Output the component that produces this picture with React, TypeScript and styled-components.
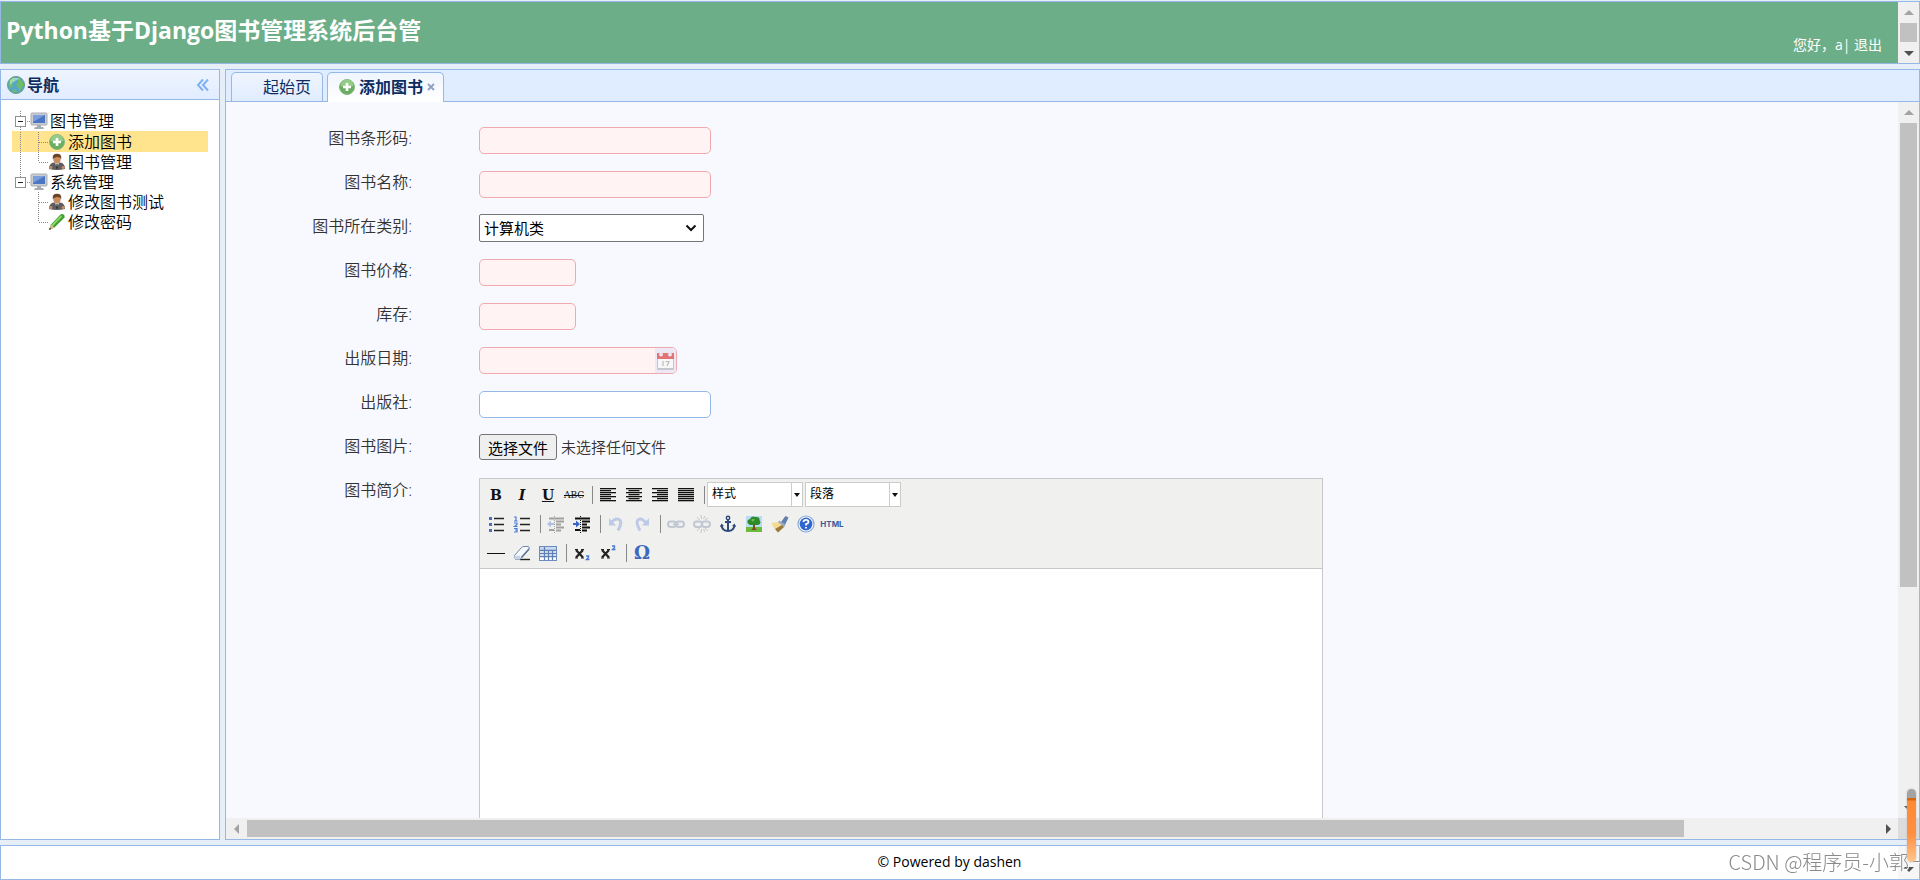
import React, { useRef } from 'react';
import styled, { createGlobalStyle, css } from 'styled-components';

const line = '#95b8e7';
const fontStack = '"Open Sans", "Noto Sans CJK SC", sans-serif';

const GlobalStyle = createGlobalStyle`
  *, *::before, *::after { box-sizing: border-box; }
  body { margin: 0; overflow: hidden; background: #e6eff8; color: #000; font: 16px/20px ${fontStack}; }
  button, input, select, textarea { font-family: inherit; margin: 0; }
`;

/* ---------- page frame ---------- */

const Page = styled.div`
  display: flex;
  flex-direction: column;
  gap: 5px;
  height: 100vh;
  padding-top: 1px;
`;

const Header = styled.header`
  display: flex;
  flex: 0 0 63px;
  border: 1px solid ${line};
  background: #6cae87;
  color: #fff;
`;

const HeaderBody = styled.div`
  display: flex;
  flex: 1;
  align-items: center;
  justify-content: space-between;
  padding: 0 16px 0 5px;
`;

const Title = styled.h1`
  margin: 0 0 6px;
  font-size: 23px;
  line-height: 30px;
  font-weight: 700;
`;

const UserLine = styled.div`
  align-self: flex-end;
  padding-bottom: 8px;
  font-size: 14px;
  a { color: inherit; text-decoration: none; }
`;

const Middle = styled.div`
  display: flex;
  flex: 1;
  gap: 5px;
  min-height: 0;
`;

const Footer = styled.footer`
  display: flex;
  flex: 0 0 35px;
  border: 1px solid ${line};
  background: #fff;
  font-size: 14px;
`;

const FooterText = styled.div`
  flex: 1;
  text-align: center;
  line-height: 32px;
`;

/* ---------- scrollbars ---------- */

const Track = styled.div<{ $row?: boolean; $bg?: string }>`
  display: flex;
  flex-direction: ${p => (p.$row ? 'row' : 'column')};
  flex-shrink: 0;
  ${p => (p.$row ? 'height: 21px;' : 'width: 21px;')}
  background: ${p => p.$bg || '#f0f0f0'};
`;

const ArrowBox = styled.div`
  display: flex;
  flex: 0 0 21px;
  align-items: center;
  justify-content: center;
`;

const Thumb = styled.div<{ $size: number; $row?: boolean }>`
  flex: ${p => p.$size} 0 0;
  margin: ${p => (p.$row ? '2px 0' : '0 2px')};
  background: #c1c1c1;
`;

const Rest = styled.div<{ $size: number }>`
  flex: ${p => p.$size} 0 0;
`;

const arrows = {
  up: 'M0 7 5 2 10 7Z',
  down: 'M0 3 5 8 10 3Z',
  left: 'M7 0 2 5 7 10Z',
  right: 'M3 0 8 5 3 10Z',
};

const Arrow = ({ dir, dim }: { dir: keyof typeof arrows; dim?: boolean }) => (
  <ArrowBox>
    <svg width="10" height="10" aria-hidden="true">
      <path d={arrows[dir]} fill={dim ? '#a3a3a3' : '#505050'} />
    </svg>
  </ArrowBox>
);

/* ---------- navigation ---------- */

const Side = styled.aside`
  flex: 0 0 220px;
  border: 1px solid ${line};
  background: #fff;
`;

const SideHead = styled.div`
  display: flex;
  align-items: center;
  height: 30px;
  padding: 0 9px 0 5px;
  border-bottom: 1px solid ${line};
  background: linear-gradient(#eff5ff, #e0ecff);
`;

const SideTitle = styled.h2`
  flex: 1;
  margin: 0 0 0 1px;
  font-size: 16px;
  line-height: 20px;
  color: #0e2d5f;
`;

const IconButton = styled.button`
  display: flex;
  padding: 0;
  border: 0;
  background: none;
  cursor: pointer;
`;

const Tree = styled.ul`
  margin: 0;
  padding: 11px 11px 0;
  list-style: none;
  font-weight: 350;
  ul { margin: 0; padding: 0; list-style: none; }
`;

const Node = styled.a<{ $selected?: boolean }>`
  display: flex;
  align-items: center;
  height: ${p => (p.$selected ? '21px' : '20px')};
  background: ${p => (p.$selected ? '#ffe48d' : 'none')};
  color: #000;
  text-decoration: none;
  svg { flex: none; }
`;

const NodeText = styled.span`
  padding-left: 2px;
`;

const Dots = ({ d }: { d: string }) => (
  <path d={d} stroke="#888" strokeDasharray="1 1" fill="none" />
);

const Toggle = ({ last }: { last?: boolean }) => (
  <svg width="18" height="20" aria-hidden="true">
    <Dots d={last ? 'M8.5 0V10' : 'M8.5 0V20'} />
    <Dots d="M13 10.5H18" />
    <rect x="3.5" y="5.5" width="10" height="10" fill="#fff" stroke="#919191" />
    <path d="M6 10.5H11" stroke="#222" />
  </svg>
);

const Indent = ({ through }: { through?: boolean }) => (
  <svg width="18" height="20" aria-hidden="true">{through && <Dots d="M8.5 0V20" />}</svg>
);

const Join = ({ last }: { last?: boolean }) => (
  <svg width="18" height="20" aria-hidden="true">
    <Dots d={last ? 'M8.5 0V10' : 'M8.5 0V20'} />
    <Dots d="M9 10.5H18" />
  </svg>
);

const Monitor = () => (
  <svg width="18" height="18" viewBox="0 0 18 18" aria-hidden="true">
    <rect x="1" y="1" width="16" height="12" rx="1" fill="#c9cdd3" stroke="#a9adb4" />
    <rect x="3" y="3" width="12" height="8" fill="#4a76c4" />
    <path d="M3 3H15L3 10Z" fill="#7c9fdb" />
    <path d="M7 13H11V15H13L14 17H4L5 15H7Z" fill="#a7abb2" />
  </svg>
);

const AddIcon = () => (
  <svg width="18" height="18" viewBox="0 0 18 18" aria-hidden="true">
    <circle cx="9" cy="9" r="7.5" fill="#69ad5f" stroke="#86b880" />
    <path d="M2.500 8A6.500 6.500 0 0 1 15.500 8Q9 10 2.500 8Z" fill="#95cb88" />
    <path d="M9 5V13M5 9H13" stroke="#fff" strokeWidth="2.600" />
  </svg>
);

const UserIcon = () => (
  <svg width="18" height="18" viewBox="0 0 18 18" aria-hidden="true">
    <path d="M1 16Q1 10 6 9.500H12Q17 10 17 16Q9 18 1 16Z" fill="#5e5e62" />
    <path d="M7 10 9 15 11 10Z" fill="#ddd" />
    <path d="M8.500 11H9.500L10 15 9 16 8 15Z" fill="#333" />
    <circle cx="2.800" cy="14.500" r="1.600" fill="#c78e63" />
    <circle cx="15.200" cy="14.500" r="1.600" fill="#c78e63" />
    <ellipse cx="9" cy="6" rx="3.800" ry="4.600" fill="#c78e63" />
    <path d="M4.800 6Q4 .800 9 .800T13.200 6Q12 3.600 9 4T4.800 6Z" fill="#6b4426" />
  </svg>
);

const Pencil = () => (
  <svg width="18" height="18" viewBox="0 0 18 18" aria-hidden="true">
    <path d="M1 17 3 11.500 12.500 1.500Q15 0 16.500 2.500L16.500 4.500 6.500 14.500Z" fill="#3f9f2f" />
    <path d="M3.500 12 13 2.200 14.200 3.400 4.700 13.200Z" fill="#8fdc6f" />
    <path d="M1 17 3 11.500 6.500 14.500Z" fill="#d9b98a" />
    <path d="M1 17 1.900 14.500 3.400 16Z" fill="#333" />
  </svg>
);

const Globe = () => (
  <svg width="20" height="20" viewBox="0 0 20 20" aria-hidden="true">
    <circle cx="10" cy="10" r="8.500" fill="#56a5cf" stroke="#6b9c74" />
    <path d="M3 6Q6 1.500 10 3L9 6 6 8 7 11 4 13Q1.500 10 3 6ZM12 3Q17 5 17.500 10L14 16 12 12 10 10 12 7ZM6 15 10 14 11 17.500Q8 18 6 15Z" fill="#6dbd68" />
    <path d="M4 5Q9 1 14 4Q9 5 4 10Z" fill="#c5ecd9" opacity=".6" />
  </svg>
);

/* ---------- tabs ---------- */

const Main = styled.main`
  display: flex;
  flex: 1;
  flex-direction: column;
  min-width: 0;
  border: 1px solid ${line};
  background: #f8f9ff;
`;

const TabBar = styled.div`
  display: flex;
  flex: 0 0 32px;
  gap: 4px;
  padding: 2px 0 0 5px;
  border-bottom: 1px solid ${line};
  background: #e0ecff;
`;

const Tab = styled.div<{ $active?: boolean }>`
  display: flex;
  align-items: center;
  border: 1px solid ${line};
  border-bottom: 0;
  border-radius: 5px 5px 0 0;
  ${p =>
    p.$active
      ? css`margin-bottom: -1px; padding: 0 8px 1px 10px; background: linear-gradient(#eff5ff, #fff);`
      : css`padding: 0 11px 0 31px; background: linear-gradient(#eff5ff, #e0ecff);`}
`;

const TabButton = styled.button<{ $active?: boolean }>`
  display: flex;
  align-items: center;
  gap: 3px;
  padding: 0;
  border: 0;
  background: none;
  color: #0e2d5f;
  font-size: 16px;
  line-height: 20px;
  font-weight: ${p => (p.$active ? 700 : 400)};
`;

const CloseTab = styled(IconButton)`
  margin-left: 4px;
`;

const Content = styled.div`
  display: grid;
  flex: 1;
  grid-template-columns: minmax(0, 1fr) 21px;
  grid-template-rows: minmax(0, 1fr) 21px;
  min-height: 0;
`;

const Corner = styled.div`
  background: #dcdcdc;
`;

/* ---------- form ---------- */

const Form = styled.form`
  display: flex;
  flex-direction: column;
  gap: 16px;
  overflow: auto;
  scrollbar-width: none;
  padding-top: 24px;
  color: #333;
`;

const Row = styled.div`
  display: grid;
  flex: none;
  grid-template-columns: 186px minmax(0, 1fr);
  column-gap: 67px;
  align-items: start;
  min-height: 28px;
`;

const Label = styled.label`
  text-align: right;
  line-height: 24px;
  font-weight: 350;
`;

const TextField = styled.input<{ $width: number; $plain?: boolean }>`
  width: ${p => p.$width}px;
  height: 27px;
  margin-top: 1px;
  padding: 0 6px;
  border: 1px solid ${p => (p.$plain ? line : '#f0a9ae')};
  border-radius: 5px;
  background: ${p => (p.$plain ? '#fff' : '#fff3f3')};
  font-size: 15px;
`;

const DateBox = styled.div`
  display: flex;
  width: 198px;
  height: 27px;
  margin-top: 1px;
  border: 1px solid #f0a9ae;
  border-radius: 5px;
  background: #fff3f3;
  overflow: hidden;
`;

const DateInput = styled.input`
  flex: 1;
  min-width: 0;
  padding: 0 6px;
  border: 0;
  background: none;
  font-size: 15px;
`;

const DateButton = styled(IconButton)`
  align-items: center;
  padding: 0 2px;
  background: #ece9f5;
`;

const SelectBox = styled.div<{ $small?: boolean }>`
  display: inline-grid;
  grid-template-columns: minmax(0, 1fr) ${p => (p.$small ? 12 : 19)}px;
  align-items: center;
  width: ${p => (p.$small ? 96 : 225)}px;
  svg { grid-area: 1 / 2; pointer-events: none; }
`;

const Select = styled.select<{ $small?: boolean }>`
  grid-area: 1 / 1 / 2 / 3;
  appearance: none;
  width: 100%;
  height: ${p => (p.$small ? 25 : 28)}px;
  padding: 0 ${p => (p.$small ? '12px 2px 4px' : '20px 0 4px')};
  border: 1px solid ${p => (p.$small ? '#ccc' : '#767676')};
  border-radius: ${p => (p.$small ? 0 : 2)}px;
  background: #fff;
  color: #000;
  font-size: ${p => (p.$small ? 12 : 15)}px;
`;

const FileRow = styled.div`
  display: flex;
  align-items: center;
  gap: 4px;
  font-size: 15px;
  font-weight: 350;
`;

const FileInput = styled.input`
  display: none;
`;

const FileButton = styled.button`
  height: 26px;
  padding: 0 8px;
  border: 1px solid #767676;
  border-radius: 3px;
  background: #efefef;
  color: #000;
  font-size: 15px;
`;

/* ---------- rich text editor ---------- */

const Editor = styled.div`
  display: flex;
  flex-direction: column;
  width: 844px;
  max-width: 100%;
  border: 1px solid #c8c8cc;
  background: #fff;
`;

const Toolbars = styled.div`
  padding: 1px 2px 1px 3px;
  border-bottom: 1px solid #c8c8cc;
  background: #f0f0ee;
`;

const ToolRow = styled.div`
  display: flex;
  align-items: center;
  height: 29px;
`;

const Tool = styled.button`
  display: flex;
  align-items: center;
  justify-content: center;
  width: 26px;
  height: 25px;
  padding: 0;
  border: 0;
  background: none;
  color: #111;
  &:disabled { opacity: .35; }
`;

const GlyphTool = styled(Tool)<{ $size?: number; $tone?: string }>`
  font: 700 ${p => p.$size || 14}px/20px "DejaVu Serif", serif;
  color: ${p => p.$tone || '#111'};
`;

const StrikeTool = styled(Tool)`
  font: 400 9px/20px "DejaVu Serif", serif;
`;

const HtmlTool = styled(Tool)`
  font: 700 8px/20px Inter, sans-serif;
  color: #3a5c9c;
`;

const Divider = styled.span`
  width: 1px;
  height: 18px;
  margin: 0 2px 0 5px;
  background: #888;
`;

const SelectGroup = styled.div`
  display: flex;
  gap: 2px;
`;

const EditArea = styled.textarea`
  height: 375px;
  border: 0;
  outline: 0;
  resize: none;
  padding: 8px;
`;

const Svg = ({ children }: { children: React.ReactNode }) => (
  <svg width="20" height="20" viewBox="0 0 20 20" fill="none" aria-hidden="true">{children}</svg>
);

const Align = ({ kind }: { kind: 'left' | 'center' | 'right' | 'full' }) => (
  <Svg>
    {[4, 6, 8, 10, 12, 14, 16].map((y, i) => {
      const w = kind === 'full' || i % 2 === 0 ? 16 : 11;
      const x = kind === 'center' ? 10 - w / 2 : kind === 'right' ? 18 - w : 2;
      return <rect key={y} x={x} y={y - 1} width={w} height="1.300" fill="#111" />;
    })}
  </Svg>
);

const BulletIcon = () => (
  <Svg>
    <path d="M8 4.500H18M8 10.500H18M8 16.500H18" stroke="#222" strokeWidth="1.300" />
    <path d="M3 3H6V6H3ZM3 9H6V12H3ZM3 15H6V18H3Z" fill="#4a6fb5" />
  </Svg>
);

const NumberIcon = () => (
  <Svg>
    <path d="M8 4.500H18M8 10.500H18M8 16.500H18" stroke="#222" strokeWidth="1.300" />
    <path d="M2 3H4V7M2 7H5.500M2 9H5V10.500L2.500 12.500H5.500M2 14.500H5V18H2M3 16H5" stroke="#4a7bd5" strokeWidth="1.200" />
  </Svg>
);

const IndentIcon = ({ out }: { out?: boolean }) => (
  <Svg>
    <path d="M3 4.500H18M10 7.500H18M10 10.500H15M3 16H8M10 13.500H18M10 16.500H15" stroke="#111" strokeWidth="2" />
    <path d="M8.500 2V19" stroke="#111" strokeDasharray="1 1" />
    <path d={out ? 'M1 10 5 6.500V9H8V11H5V13.500Z' : 'M8 10 4 6.500V9H1V11H4V13.500Z'} fill="#3565c8" />
  </Svg>
);

const UndoIcon = () => (
  <Svg>
    <path d="M5 9Q9 3.500 13 5.500T12 16.500" stroke="#5f86d8" strokeWidth="3" />
    <path d="M3 4V11.500H10Z" fill="#5f86d8" />
  </Svg>
);

const RedoIcon = () => (
  <Svg>
    <path d="M14 9Q10 3.500 6.500 5.500T8 16.500" stroke="#5f86d8" strokeWidth="3" />
    <path d="M17 4V11.500H10Z" fill="#5f86d8" />
  </Svg>
);

const LinkIcon = ({ broken }: { broken?: boolean }) => (
  <Svg>
    <rect x="2" y="7.500" width="8" height="5.500" rx="2.700" stroke="#6c7ea3" strokeWidth="2" />
    <rect x="10" y="7.500" width="8" height="5.500" rx="2.700" stroke="#6c7ea3" strokeWidth="2" />
    {broken ? (
      <path d="M9 1 9.500 5M13 2 11.500 5M5 3 7.500 6M16 4 13 6M9 19 9.500 15M13 18 11.500 15M5 17 7.500 14M16 17 13 14" stroke="#777" />
    ) : (
      <path d="M7 10.300H13" stroke="#6c7ea3" strokeWidth="1.600" />
    )}
  </Svg>
);

const AnchorIcon = () => (
  <Svg>
    <circle cx="10" cy="4" r="1.700" stroke="#2e4a78" strokeWidth="1.400" />
    <path d="M10 6V17M7 8H13M3.500 11Q4 17 10 17T16.500 11" stroke="#2e4a78" strokeWidth="2" />
    <path d="M2 13 3.500 9.500 6 12ZM18 13 16.500 9.500 14 12Z" fill="#2e4a78" />
  </Svg>
);

const ImageIcon = () => (
  <Svg>
    <rect x="2" y="2" width="16" height="16" fill="#b9dcf5" />
    <rect x="2" y="13" width="16" height="5" fill="#6dbb3c" />
    <path d="M9 9H11V14L13 16H7L9 14Z" fill="#7a4d20" />
    <path d="M4 9.500Q2 6 6 5Q8 1.500 11 3Q16 2.500 15.500 6Q18 9.500 14 11H6Z" fill="#2f8a2a" />
    <path d="M7 6Q9 4 11 5.500L9 8Z" fill="#65bd4d" />
  </Svg>
);

const BrushIcon = () => (
  <Svg>
    <path d="M11 8 15.500 2 18.500 3.500 15 11Z" fill="#5f7fae" />
    <path d="M9 6.500 15.500 10.500 14 13.500 7.500 9Z" fill="#99a9c4" />
    <path d="M1.500 9 8 8 14 13 8 18.500Q7 16 5 15T1.500 9Z" fill="#f3dc92" />
    <path d="M5 15 12 11 14 13 8 18.500Z" fill="#9a7a3d" />
  </Svg>
);

const HelpIcon = () => (
  <Svg>
    <circle cx="10" cy="10" r="8" fill="#fff" stroke="#8aa6d8" strokeWidth="1.200" />
    <circle cx="10" cy="10" r="6.400" fill="#2f66cf" />
    <path d="M7.500 8Q7.500 5.800 10 5.800T12.500 8Q12.500 9.200 10 10.200V11.500M10 13V14.500" stroke="#fff" strokeWidth="1.800" />
  </Svg>
);

const EraserIcon = () => (
  <Svg>
    <path d="M8 16.500H18" stroke="#222" strokeWidth="1.400" />
    <path d="M2.500 12.500 9.500 4.500Q10.500 3.500 12 3.500H16Q18 4 17 6L9.500 14.500 8 16.500H4Q1.500 15.500 2.500 12.500Z" fill="#f5f8fc" stroke="#6f86a8" />
    <path d="M2.500 12.800H8.500L8 16.500H4Q1.500 15.500 2.500 12.800Z" fill="#c9d4e6" />
    <path d="M9.500 14.500 17 6" stroke="#5c7397" strokeWidth="1.600" />
  </Svg>
);

const TableIcon = () => (
  <Svg>
    <rect x="1.500" y="3.500" width="17" height="14" fill="#fff" stroke="#6e8cbf" />
    <path d="M2 4H18V7H2Z" fill="#c7d8f0" />
    <path d="M2 7.500H18M2 10.500H18M2 13.500H18M6.500 4V17M10.500 7V17M14.500 7V17" stroke="#5f7fb5" strokeWidth="1.300" />
  </Svg>
);

const ScriptIcon = ({ sup }: { sup?: boolean }) => (
  <Svg>
    <path d="M4 7 11 14.500M11 7 4 14.500" stroke="#222" strokeWidth="2.200" />
    <path d="M3 6.500H6M9 6.500H12M3 15H6M9 15H12" stroke="#222" />
    <path d={sup ? 'M14 3H16.500V4.500L14.500 6.500H17.500' : 'M14 13H16.500V14.500L14.500 16.500H17.500'} stroke="#4a78cf" strokeWidth="1.300" />
  </Svg>
);

const CalendarIcon = () => (
  <svg width="17" height="20" viewBox="0 0 17 20" aria-hidden="true">
    <rect x="0" y="2" width="17" height="17" rx="1" fill="#c6c6ce" />
    <rect x="1" y="7" width="15" height="10" fill="#f7f7f7" />
    <rect x="0" y="2" width="17" height="6" fill="#e27476" />
    <circle cx="4" cy="3.500" r="2" fill="#ece4ea" />
    <circle cx="13" cy="3.500" r="2" fill="#ece4ea" />
    <path d="M6 10V15M8.500 10.500H12L10 15" stroke="#bcbcbc" fill="none" strokeWidth="1.200" />
  </svg>
);

const SmallSelect = ({ text }: { text: string }) => (
  <SelectBox $small>
    <Select $small aria-label={text}>
      <option>{text}</option>
    </Select>
    <svg width="11" height="23" aria-hidden="true">
      <path d="M0.500 0V23" stroke="#ccc" />
      <path d="M3 10H9L6 14Z" fill="#111" />
    </svg>
  </SelectBox>
);

const RichEditor = () => (
  <Editor>
    <Toolbars>
      <ToolRow>
        <GlyphTool type="button" aria-label="粗体">B</GlyphTool>
        <GlyphTool type="button" aria-label="斜体"><em>I</em></GlyphTool>
        <GlyphTool type="button" aria-label="下划线"><u>U</u></GlyphTool>
        <StrikeTool type="button" aria-label="删除线"><s>ABC</s></StrikeTool>
        <Divider />
        <Tool type="button" aria-label="左对齐"><Align kind="left" /></Tool>
        <Tool type="button" aria-label="居中"><Align kind="center" /></Tool>
        <Tool type="button" aria-label="右对齐"><Align kind="right" /></Tool>
        <Tool type="button" aria-label="两端对齐"><Align kind="full" /></Tool>
        <Divider />
        <SelectGroup>
          <SmallSelect text="样式" />
          <SmallSelect text="段落" />
        </SelectGroup>
      </ToolRow>
      <ToolRow>
        <Tool type="button" aria-label="项目列表"><BulletIcon /></Tool>
        <Tool type="button" aria-label="编号列表"><NumberIcon /></Tool>
        <Divider />
        <Tool type="button" disabled aria-label="减少缩进"><IndentIcon out /></Tool>
        <Tool type="button" aria-label="增加缩进"><IndentIcon /></Tool>
        <Divider />
        <Tool type="button" disabled aria-label="撤销"><UndoIcon /></Tool>
        <Tool type="button" disabled aria-label="重做"><RedoIcon /></Tool>
        <Divider />
        <Tool type="button" disabled aria-label="链接"><LinkIcon /></Tool>
        <Tool type="button" disabled aria-label="取消链接"><LinkIcon broken /></Tool>
        <Tool type="button" aria-label="锚点"><AnchorIcon /></Tool>
        <Tool type="button" aria-label="图片"><ImageIcon /></Tool>
        <Tool type="button" aria-label="清理代码"><BrushIcon /></Tool>
        <Tool type="button" aria-label="帮助"><HelpIcon /></Tool>
        <HtmlTool type="button">HTML</HtmlTool>
      </ToolRow>
      <ToolRow>
        <Tool type="button" aria-label="水平线"><Svg><path d="M1 10.500H19" stroke="#111" /></Svg></Tool>
        <Tool type="button" aria-label="清除格式"><EraserIcon /></Tool>
        <Tool type="button" aria-label="表格"><TableIcon /></Tool>
        <Divider />
        <Tool type="button" aria-label="下标"><ScriptIcon /></Tool>
        <Tool type="button" aria-label="上标"><ScriptIcon sup /></Tool>
        <Divider />
        <GlyphTool type="button" $size={18} $tone="#3d68c0" aria-label="特殊字符">Ω</GlyphTool>
      </ToolRow>
    </Toolbars>
    <EditArea id="intro" />
  </Editor>
);

/* ---------- overlays in the corner ---------- */

const Watermark = styled.div`
  position: fixed;
  right: -9px;
  bottom: 4px;
  color: #8a8a8a;
  font: 300 20px/28px "Noto Sans CJK SC", sans-serif;
  white-space: nowrap;
  text-shadow: 1px 1px 0 #fff;
`;

const Gauge = styled.div`
  position: fixed;
  right: 4px;
  bottom: 18px;
  width: 9px;
  height: 73px;
  border-radius: 5px;
  background: linear-gradient(#a3a3a3 0 9px, #d9660f 9px 11px, #ff8a35 12px, #ff8f3f 45px, #ffc58f);
  box-shadow: 0 0 2px #bbb;
`;

const App = () => {
  const fileRef = useRef<HTMLInputElement>(null);
  return (
    <>
      <GlobalStyle />
      <Page>
        <Header>
          <HeaderBody>
            <Title>Python基于Django图书管理系统后台管</Title>
            <UserLine>您好，a| <a href="#logout">退出</a></UserLine>
          </HeaderBody>
          <Track aria-hidden="true">
            <Arrow dir="up" dim />
            <Thumb $size={1} />
            <Arrow dir="down" />
          </Track>
        </Header>

        <Middle>
          <Side>
            <SideHead>
              <Globe />
              <SideTitle>导航</SideTitle>
              <IconButton type="button" aria-label="收起">
                <svg width="14" height="14" viewBox="0 0 14 14" fill="none" aria-hidden="true">
                  <path d="M7 1.500 2 7 7 12.500M12 1.500 7 7 12 12.500" stroke="#7fb2ee" strokeWidth="2" />
                </svg>
              </IconButton>
            </SideHead>
            <Tree>
              <li>
                <Node href="#books"><Toggle /><Monitor /><NodeText>图书管理</NodeText></Node>
                <ul>
                  <li><Node href="#add" $selected><Indent through /><Join /><AddIcon /><NodeText>添加图书</NodeText></Node></li>
                  <li><Node href="#manage"><Indent through /><Join last /><UserIcon /><NodeText>图书管理</NodeText></Node></li>
                </ul>
              </li>
              <li>
                <Node href="#system"><Toggle last /><Monitor /><NodeText>系统管理</NodeText></Node>
                <ul>
                  <li><Node href="#edit"><Indent /><Join /><UserIcon /><NodeText>修改图书测试</NodeText></Node></li>
                  <li><Node href="#password"><Indent /><Join last /><Pencil /><NodeText>修改密码</NodeText></Node></li>
                </ul>
              </li>
            </Tree>
          </Side>

          <Main>
            <TabBar>
              <Tab><TabButton type="button">起始页</TabButton></Tab>
              <Tab $active>
                <TabButton type="button" $active><AddIcon />添加图书</TabButton>
                <CloseTab type="button" aria-label="关闭">
                  <svg width="8" height="8" viewBox="0 0 8 8" aria-hidden="true">
                    <path d="M1 1 7 7M7 1 1 7" stroke="#8f9fc4" strokeWidth="1.800" />
                  </svg>
                </CloseTab>
              </Tab>
            </TabBar>
            <Content>
              <Form>
                <Row>
                  <Label htmlFor="barcode">图书条形码:</Label>
                  <TextField id="barcode" $width={232} />
                </Row>
                <Row>
                  <Label htmlFor="name">图书名称:</Label>
                  <TextField id="name" $width={232} />
                </Row>
                <Row>
                  <Label htmlFor="category">图书所在类别:</Label>
                  <SelectBox>
                    <Select id="category"><option>计算机类</option></Select>
                    <svg width="12" height="8" viewBox="0 0 12 8" fill="none" aria-hidden="true">
                      <path d="M1.500 1.500 6 6 10.500 1.500" stroke="#111" strokeWidth="2" />
                    </svg>
                  </SelectBox>
                </Row>
                <Row>
                  <Label htmlFor="price">图书价格:</Label>
                  <TextField id="price" $width={97} />
                </Row>
                <Row>
                  <Label htmlFor="stock">库存:</Label>
                  <TextField id="stock" $width={97} />
                </Row>
                <Row>
                  <Label htmlFor="date">出版日期:</Label>
                  <DateBox>
                    <DateInput id="date" />
                    <DateButton type="button" aria-label="选择日期"><CalendarIcon /></DateButton>
                  </DateBox>
                </Row>
                <Row>
                  <Label htmlFor="publisher">出版社:</Label>
                  <TextField id="publisher" $width={232} $plain />
                </Row>
                <Row>
                  <Label htmlFor="photo">图书图片:</Label>
                  <FileRow>
                    <FileInput ref={fileRef} id="photo" type="file" />
                    <FileButton type="button" onClick={() => fileRef.current?.click()}>选择文件</FileButton>
                    <span>未选择任何文件</span>
                  </FileRow>
                </Row>
                <Row>
                  <Label htmlFor="intro">图书简介:</Label>
                  <RichEditor />
                </Row>
              </Form>
              <Track aria-hidden="true">
                <Arrow dir="up" dim />
                <Thumb $size={464} />
                <Rest $size={210} />
                <Arrow dir="down" />
              </Track>
              <Track $row aria-hidden="true">
                <Arrow dir="left" dim />
                <Thumb $row $size={1437} />
                <Rest $size={193} />
                <Arrow dir="right" />
              </Track>
              <Corner />
            </Content>
          </Main>
        </Middle>

        <Footer>
          <FooterText>© Powered by dashen</FooterText>
          <Track $bg="#f6f6f6" aria-hidden="true">
            <Rest $size={1} />
            <Arrow dir="down" />
          </Track>
        </Footer>
      </Page>
      <Watermark>CSDN @程序员-小郭一</Watermark>
      <Gauge />
    </>
  );
};

export default App;
